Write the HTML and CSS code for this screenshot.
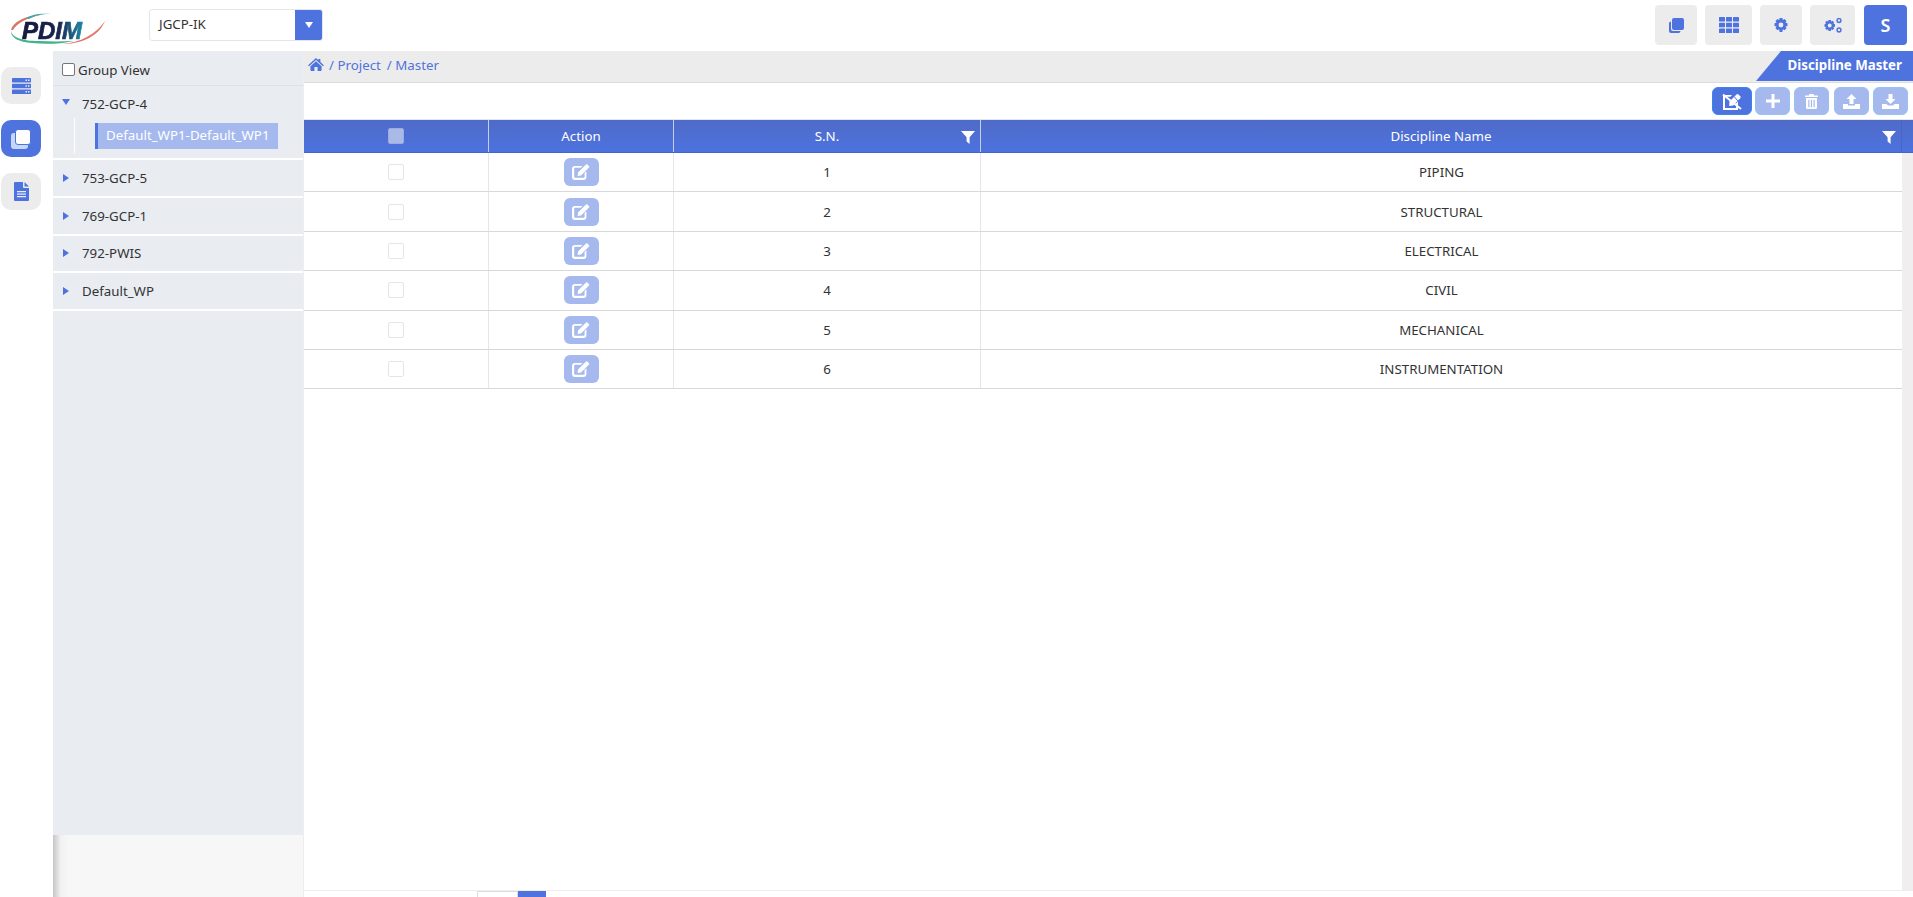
FILE: index.html
```html
<!DOCTYPE html>
<html lang="en">
<head>
<meta charset="utf-8">
<title>Discipline Master</title>
<link rel="stylesheet" href="styles.css">
</head>
<body>
<svg class="defs" width="0" height="0" aria-hidden="true">
  <symbol id="i-filter" viewBox="0 0 14 14"><path d="M0 1h14L8.600 7.200V14L5.600 11.500V7.200z"/></symbol>
  <symbol id="i-edit" viewBox="0 0 18 16"><path d="M3 2h7.500L8.800 3.800H3.200a1 1 0 0 0-1 1v8a1 1 0 0 0 1 1h8.400a1 1 0 0 0 1-1V9l1.800-1.800V13a3 3 0 0 1-3 3H3a3 3 0 0 1-3-3V5a3 3 0 0 1 3-3z"/><path d="M6 8.600 13 1.600l3 3-7 7-3.400.5zM14 .6a1 1 0 0 1 1.400 0l1.600 1.600a1 1 0 0 1 0 1.400l-.9.9-3-3z"/></symbol>
</svg>

<header class="topbar">
  <div class="logo">
    <svg width="96" height="32" viewBox="0 0 96 32">
      <defs>
        <linearGradient id="logo-fill" x1="0" x2="1" y1="0" y2="0">
          <stop offset="0" stop-color="#15193a"/>
          <stop offset=".6" stop-color="#1a2550"/>
          <stop offset="1" stop-color="#1d8ba8"/>
        </linearGradient>
        <filter id="logo-soft" x="-5%" y="-5%" width="110%" height="110%"><feGaussianBlur stdDeviation=".35"/></filter>
      </defs>
      <g filter="url(#logo-soft)">
        <path d="M1 18C3 10 14 4 30 3 17 6 7 11 3 18z" fill="#d8766c"/>
        <path d="M16 6C22 2 32 1 41 2 31 2 24 4 19 7z" fill="#4aa5a5"/>
        <path d="M1 18C1 26 14 29 28 29c12 .5 24 .5 36 0-14 3-28 3.500-42 2C9 30 0 26 1 18z" fill="#3fb28c"/>
        <path d="M52 32C70 31 86 22 95 9 89 24 72 32 52 32z" fill="#e0776a"/>
        <text class="logo-text" x="12" y="27" fill="url(#logo-fill)" stroke="url(#logo-fill)" stroke-width=".7">PDIM</text>
      </g>
    </svg>
  </div>
  <div class="select">
    <span class="select-value">JGCP-IK</span>
    <span class="select-caret"></span>
  </div>
  <nav class="top-actions">
    <a class="top-btn top-btn-42">
      <svg width="15" height="15" viewBox="0 0 15 15"><path class="fill-blue" d="M5 0h8a2 2 0 0 1 2 2v8a2 2 0 0 1-2 2H5a2 2 0 0 1-2-2V2a2 2 0 0 1 2-2z"/><path class="fill-blue" d="M2 3.500V11a2 2 0 0 0 2 2h7.500A2 2 0 0 1 10 15H2a2 2 0 0 1-2-2V5a2 2 0 0 1 2-1.500z"/></svg>
    </a>
    <a class="top-btn top-btn-47">
      <svg width="20" height="16" viewBox="0 0 20 16" class="fill-blue"><rect width="6" height="4.600" rx=".6"/><rect x="7" width="6" height="4.600" rx=".6"/><rect x="14" width="6" height="4.600" rx=".6"/><rect y="5.700" width="6" height="4.600" rx=".6"/><rect x="7" y="5.700" width="6" height="4.600" rx=".6"/><rect x="14" y="5.700" width="6" height="4.600" rx=".6"/><rect y="11.400" width="6" height="4.600" rx=".6"/><rect x="7" y="11.400" width="6" height="4.600" rx=".6"/><rect x="14" y="11.400" width="6" height="4.600" rx=".6"/></svg>
    </a>
    <a class="top-btn top-btn-42">
      <svg width="14" height="14" viewBox="0 0 14 14"><path class="fill-blue" fill-rule="evenodd" d="M5.600 0h2.800l.4 2 1.700-.9 2 2-1 1.700 2 .5v2.800l-2 .5 1 1.700-2 2-1.700-1-.4 2.700H5.600l-.4-2.700-1.700 1-2-2 1-1.700-2-.5V5.300l2-.5-1-1.700 2-2 1.700.9zM7 4.600a2.400 2.400 0 1 0 0 4.800 2.400 2.400 0 0 0 0-4.800z"/></svg>
    </a>
    <a class="top-btn top-btn-45">
      <svg width="18" height="15" viewBox="0 0 18 15"><path class="fill-blue" fill-rule="evenodd" d="M4.500 2h2.400l.3 1.500 1.400-.7 1.600 1.700-.8 1.300 1.600.5v2.400l-1.600.4.800 1.400-1.600 1.600-1.400-.8-.3 1.700H4.500l-.3-1.700-1.400.8-1.600-1.600.8-1.400-1.500-.4V6.300L2 5.800 1.200 4.500l1.600-1.700 1.400.7zM5.700 5.500a2 2 0 1 0 0 4 2 2 0 0 0 0-4z"/><circle class="ring" cx="15" cy="2.500" r="1.900"/><circle class="ring" cx="15" cy="12" r="1.900"/></svg>
    </a>
    <a class="top-btn top-btn-user">S</a>
  </nav>
</header>

<div class="main">
  <aside class="rail">
    <a class="rail-btn">
      <svg width="19" height="16" viewBox="0 0 19 16"><rect class="fill-blue" width="19" height="4.400" rx=".6"/><rect class="fill-blue" y="5.800" width="19" height="4.400" rx=".6"/><rect class="fill-blue" y="11.600" width="19" height="4.400" rx=".6"/><path class="fill-pale" d="M13.500 1.500h1.500V3h-1.500zM16 1.500h1.500V3H16zM13.500 7.300h1.500v1.500h-1.500zM16 7.300h1.500v1.500H16zM13.500 13.100h1.500v1.500h-1.500zM16 13.100h1.500v1.500H16z"/></svg>
    </a>
    <a class="rail-btn rail-btn-active">
      <svg width="20" height="20" viewBox="0 0 20 20"><path class="fill-pale-blue" d="M3 4h11a3 3 0 0 1 3 3v10a3 3 0 0 1-3 3H3a3 3 0 0 1-3-3V7a3 3 0 0 1 3-3z"/><rect class="fill-white" stroke="#4f73de" x="4.500" y=".5" width="15" height="15" rx="2.500"/></svg>
    </a>
    <a class="rail-btn">
      <svg width="15" height="19" viewBox="0 0 15 19"><path class="fill-blue" d="M1 0h8v5a1 1 0 0 0 1 1h5v12a1 1 0 0 1-1 1H1a1 1 0 0 1-1-1V1a1 1 0 0 1 1-1z"/><path class="fill-blue" d="M10.500 0 15 4.500h-4.500z"/><path class="fill-pale" d="M3 9h9v1.200H3zM3 11.500h9v1.200H3zM3 14h9v1.200H3z"/></svg>
    </a>
  </aside>

  <section class="tree-panel">
    <div class="tree">
      <label class="group-view"><span class="box"></span>Group View</label>
      <div class="tree-node tree-node-open">
        <div class="tree-head tree-head-open"><span class="arrow arrow-down"></span>752-GCP-4</div>
        <div class="tree-children">
          <div class="tree-leaf">Default_WP1-Default_WP1</div>
        </div>
      </div>
      <div class="tree-node"><div class="tree-head"><span class="arrow"></span>753-GCP-5</div></div>
      <div class="tree-node"><div class="tree-head"><span class="arrow"></span>769-GCP-1</div></div>
      <div class="tree-node"><div class="tree-head"><span class="arrow"></span>792-PWIS</div></div>
      <div class="tree-node"><div class="tree-head"><span class="arrow"></span>Default_WP</div></div>
    </div>
    <div class="tree-foot"></div>
  </section>

  <main class="content">
    <div class="crumbbar">
      <div class="crumbs">
        <svg width="16" height="13" viewBox="0 0 17 14"><path class="fill-blue" d="M8.500 0 11 2.300V1h2.200v3.300L17 7.700l-1 1.100L8.500 2.200 1 8.800 0 7.700z"/><path class="fill-blue" d="M8.500 3.500 14.500 8.800V13a1 1 0 0 1-1 1H10.200V9.800H6.800V14H3.500a1 1 0 0 1-1-1V8.800z"/></svg>
        <span class="crumb-first">/ Project</span><span>/ Master</span>
      </div>
      <div class="page-title">Discipline Master</div>
    </div>

    <div class="toolbar">
      <a class="tool tool-dark">
        <svg width="20" height="17" viewBox="0 0 20 17"><path class="fill-white" fill-rule="evenodd" d="M1 2h9L8.500 3.800H3V15h11v-4.500l2-2V17H1z"/><path class="fill-white" d="M7.500 8.500 14.500 1.500a1.500 1.500 0 0 1 2 0l1.700 1.700a1.500 1.500 0 0 1 0 2l-7 7.300-4 .5z"/><path d="M1 1.500 19 16" stroke="#fff" stroke-width="2"/><path d="M12.500 4 16 8" stroke="#4f73de" stroke-width="1"/></svg>
      </a>
      <a class="tool">
        <svg width="14" height="14" viewBox="0 0 14 14"><path class="fill-white" d="M5.500 0h3v5.500H14v3H8.500V14h-3V8.500H0v-3h5.500z"/></svg>
      </a>
      <a class="tool">
        <svg width="13" height="15" viewBox="0 0 13 15"><path class="fill-white" d="M4.500 0h4l.7 1.500H13V3H0V1.500h3.800zM1 4h11v9.500a1.500 1.500 0 0 1-1.500 1.500h-8A1.500 1.500 0 0 1 1 13.500zM3.300 5.800v7.400h1.200V5.800zM5.900 5.800v7.400h1.200V5.800zM8.500 5.800v7.400h1.200V5.800z" fill-rule="evenodd"/></svg>
      </a>
      <a class="tool">
        <svg width="17" height="15" viewBox="0 0 17 15"><path class="fill-white" d="M8.500 0 13.500 5H10.500v5h-4V5H3.500zM0 10h5v1.500h7V10h5v5H0z"/></svg>
      </a>
      <a class="tool">
        <svg width="17" height="15" viewBox="0 0 17 15"><path class="fill-white" d="M6.500 0h4v5h3l-5 5-5-5h3zM0 10h4.500l1.500 1.500h5L12.500 10H17v5H0z"/></svg>
      </a>
    </div>

    <div class="grid-wrap">
      <div class="grid-head">
        <div class="cell cell-check"><span class="check check-head"></span></div>
        <div class="cell cell-action">Action</div>
        <div class="cell cell-sn">S.N.<svg class="filter" width="14" height="14"><use href="#i-filter"/></svg></div>
        <div class="cell cell-name">Discipline Name<svg class="filter" width="14" height="14"><use href="#i-filter"/></svg></div>
        <div class="cell-gutter"></div>
      </div>
      <div class="grid-body">
        <div class="rows">
          <div class="row"><div class="cell cell-check"><span class="check"></span></div><div class="cell cell-action"><a class="edit"><svg width="18" height="16"><use href="#i-edit"/></svg></a></div><div class="cell cell-sn">1</div><div class="cell cell-name">PIPING</div></div>
          <div class="row"><div class="cell cell-check"><span class="check"></span></div><div class="cell cell-action"><a class="edit"><svg width="18" height="16"><use href="#i-edit"/></svg></a></div><div class="cell cell-sn">2</div><div class="cell cell-name">STRUCTURAL</div></div>
          <div class="row"><div class="cell cell-check"><span class="check"></span></div><div class="cell cell-action"><a class="edit"><svg width="18" height="16"><use href="#i-edit"/></svg></a></div><div class="cell cell-sn">3</div><div class="cell cell-name">ELECTRICAL</div></div>
          <div class="row"><div class="cell cell-check"><span class="check"></span></div><div class="cell cell-action"><a class="edit"><svg width="18" height="16"><use href="#i-edit"/></svg></a></div><div class="cell cell-sn">4</div><div class="cell cell-name">CIVIL</div></div>
          <div class="row"><div class="cell cell-check"><span class="check"></span></div><div class="cell cell-action"><a class="edit"><svg width="18" height="16"><use href="#i-edit"/></svg></a></div><div class="cell cell-sn">5</div><div class="cell cell-name">MECHANICAL</div></div>
          <div class="row"><div class="cell cell-check"><span class="check"></span></div><div class="cell cell-action"><a class="edit"><svg width="18" height="16"><use href="#i-edit"/></svg></a></div><div class="cell cell-sn">6</div><div class="cell cell-name">INSTRUMENTATION</div></div>
        </div>
        <div class="gutter"></div>
      </div>
      <div class="pager">
        <span class="page-size"></span><span class="page-current"></span>
      </div>
    </div>
  </main>
</div>
</body>
</html>
```

FILE: styles.css
```css
* { box-sizing: border-box; }
html, body { margin: 0; height: 100%; }
body {
  width: 1913px;
  height: 897px;
  overflow: hidden;
  background: #fff;
  color: #333;
  font-family: "Noto Sans", "Open Sans", sans-serif;
  font-size: 13.300px;
  display: flex;
  flex-direction: column;
}
a { display: flex; align-items: center; justify-content: center; }
.defs { position: absolute; }
.fill-blue { fill: #4f73de; }
.fill-white { fill: #fff; }
.fill-pale { fill: #e9edf8; }
.fill-pale-blue { fill: #c6d8f8; }
.ring { fill: none; stroke: #4f73de; stroke-width: 1.500; }

/* top bar */
.topbar {
  flex: 0 0 51px;
  display: flex;
  align-items: center;
  padding-right: 6px;
  background: #fff;
}
.logo { width: 149px; padding: 5px 0 0 10px; display: flex; }
.logo-text { font: italic bold 24px "Liberation Sans", sans-serif; }
.select {
  width: 174px;
  height: 32px;
  display: flex;
  align-items: stretch;
  border: 1px solid #e4e6ea;
  border-radius: 3px;
  overflow: hidden;
  margin-top: -1px;
}
.select-value { flex: 1; padding-left: 9px; line-height: 29px; color: #333; }
.select-caret { width: 27px; background: #4f73de; display: flex; align-items: center; justify-content: center; }
.select-caret::after {
  content: "";
  border-top: 6px solid #fff;
  border-left: 4.500px solid transparent;
  border-right: 4.500px solid transparent;
}
.top-actions { margin-left: auto; display: flex; gap: 8px; margin-top: -1px; }
.top-btn { height: 40px; background: #ececec; border-radius: 4px; }
.top-btn-42 { width: 42px; }
.top-btn-47 { width: 47px; }
.top-btn-45 { width: 45px; }
.top-btn-user {
  width: 43px;
  margin-left: 1px;
  background: #4f73de;
  color: #fff;
  font-size: 18px;
  font-weight: 600;
}

/* body */
.main { flex: 1; display: flex; min-height: 0; }
.rail {
  width: 53px;
  padding: 16px 0 0 1px;
  display: flex;
  flex-direction: column;
  gap: 16px;
  align-items: flex-start;
  background: #fff;
}
.rail-btn { width: 40px; height: 37px; background: #ececec; border-radius: 10px; }
.rail-btn-active { background: #4f73de; }

/* tree */
.tree-panel { width: 251px; display: flex; flex-direction: column; border-right: 1px solid #eee; }
.tree { flex: 0 0 784px; background: #e9edf2; }
.tree-foot {
  flex: 1;
  background: linear-gradient(to right, #c6c6c6 0, #f2f2f2 8px, #f7f7f7 16px);
}
.group-view {
  height: 35px;
  padding: 3px 0 0 9px;
  display: flex;
  align-items: center;
  gap: 3px;
  border-bottom: 1px solid #dde1e7;
}
.box {
  width: 13px;
  height: 13px;
  background: #fff;
  border: 1px solid #767676;
  border-radius: 2px;
}
.tree-node { border-bottom: 2px solid #fff; }
.tree-head {
  height: 35.750px;
  padding-left: 10px;
  display: flex;
  align-items: center;
  color: #333;
}
.tree-head-open { height: 36px; }
.arrow {
  width: 0;
  height: 0;
  margin-right: 13px;
  border-left: 6px solid #4f73de;
  border-top: 4px solid transparent;
  border-bottom: 4px solid transparent;
}
.arrow-down {
  margin: 0 12px 4px -1px;
  border-top: 6px solid #4f73de;
  border-left: 4px solid transparent;
  border-right: 4px solid transparent;
  border-bottom: 0;
}
.tree-children {
  height: 35px;
  margin: -4px 0 5px 21px;
  padding: 5px 0 0 20px;
  border-left: 1px solid #fff;
}
.tree-leaf {
  width: 183px;
  height: 26px;
  padding-left: 8px;
  line-height: 25px;
  background: #a6b9ee;
  border-left: 3px solid #4f73de;
  color: #fff;
  white-space: nowrap;
}

/* content */
.content { flex: 1; min-width: 0; display: flex; flex-direction: column; }
.crumbbar {
  height: 32px;
  display: flex;
  justify-content: space-between;
  background: #ececec;
  border-bottom: 1px solid #dcdcdc;
}
.crumbs {
  display: flex;
  align-items: center;
  gap: 6px;
  padding-left: 4px;
  color: #4f73de;
  height: 27px;
}
.crumb-first { margin-left: -1px; }
.page-title {
  width: 157px;
  height: 30px;
  padding-right: 11px;
  line-height: 29px;
  text-align: right;
  color: #fff;
  font-size: 13.300px;
  font-weight: 700;
  background: #4f73de;
  clip-path: polygon(25px 0, 100% 0, 100% 100%, 0 100%);
}
.toolbar {
  height: 36px;
  padding: 4px 5px 0 0;
  display: flex;
  justify-content: flex-end;
  gap: 4.330px;
}
.tool {
  width: 35px;
  height: 28px;
  background: #a6b9ee;
  border: 1px solid #99c2f3;
  border-radius: 6px;
}
.tool-dark { width: 40px; background: #4f73de; border-color: #3a86ee; margin-right: -1.330px; }
.grid-wrap { flex: 1; min-height: 0; display: flex; flex-direction: column; }
.grid-head {
  height: 34px;
  display: flex;
  border-top: 1px solid #e6e6e6;
  border-bottom: 1px solid #4766c4;
  background: linear-gradient(#506bc8, #4c72df);
  color: #fff;
}
.grid-head .cell { border-right: 1px solid #c3cfee; }
.grid-head .cell-name { border-right: 1px solid #4766c4; }
.cell-gutter { flex: 1; }
.cell {
  position: relative;
  display: flex;
  align-items: center;
  justify-content: center;
}
.cell-check { width: 185px; }
.cell-action { width: 185px; }
.cell-sn { width: 307px; }
.cell-name { width: 921px; }
.filter { position: absolute; right: 5px; top: 10px; fill: #fff; }
.grid-body { flex: 1; min-height: 0; display: flex; }
.rows { width: 1598px; }
.gutter { flex: 1; background: #f0eeee; }
.row {
  height: 39.400px;
  display: flex;
  border-bottom: 1px solid #d8d8d8;
}
.row .cell-check, .row .cell-action, .row .cell-sn { border-right: 1px solid #e6e6e6; }
.check {
  width: 16px;
  height: 16px;
  background: #fff;
  border: 1px solid #e6e6e6;
  border-radius: 2px;
}
.check-head { background: #a9b9e8; border-color: #9aace0; }
.edit {
  width: 35px;
  height: 28px;
  background: #a6b9ee;
  border-radius: 6px;
  fill: #fff;
}
.pager {
  height: 7px;
  padding-left: 173px;
  display: flex;
  align-items: flex-start;
  border-top: 1px solid #f3ecec;
}
.page-size { width: 41px; height: 6px; border: 1px solid #ddd; border-bottom: 0; background: #fff; }
.page-current { width: 28px; height: 6px; background: #4f73de; }
```
